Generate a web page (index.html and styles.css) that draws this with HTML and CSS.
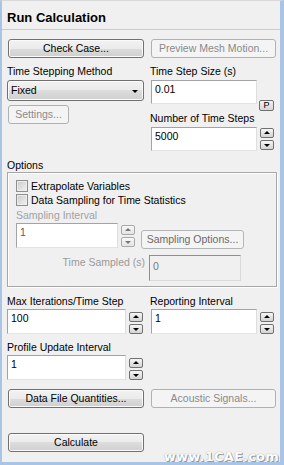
FILE: index.html
```html
<!DOCTYPE html>
<html>
<head>
<meta charset="utf-8">
<link rel="stylesheet" href="styles.css">
</head>
<body>
<div class="panel">
  <div class="title">Run Calculation</div>
  <div class="content">
    <div class="two btn-row">
      <div class="col-l"><button class="btn btn-l">Check Case...</button></div>
      <div class="col-r"><button class="btn dis btn-r">Preview Mesh Motion...</button></div>
    </div>

    <div class="two sec2">
      <div class="col-l">
        <div class="lbl">Time Stepping Method</div>
        <div class="combo"><span>Fixed</span><span class="caret"></span></div>
        <button class="btn dis settings">Settings...</button>
      </div>
      <div class="col-r">
        <div class="lbl">Time Step Size (s)</div>
        <div class="frow r24">
          <div class="input in-r">0.01</div>
          <div class="pbtn">P</div>
        </div>
        <div class="lbl mt8">Number of Time Steps</div>
        <div class="frow r24">
          <div class="input in-r">5000</div>
          <div class="spin"><span class="sb up"></span><span class="sb down"></span></div>
        </div>
      </div>
    </div>

    <div class="lbl opt-lbl">Options</div>
    <div class="group">
      <div class="chk-row"><span class="chk"></span>Extrapolate Variables</div>
      <div class="chk-row"><span class="chk"></span>Data Sampling for Time Statistics</div>
      <div class="lbl dis-t samp-lbl">Sampling Interval</div>
      <div class="frow samp-row">
        <div class="input in-s grey-val">1</div>
        <div class="spin dspin"><span class="sb up"></span><span class="sb down"></span></div>
        <button class="btn dis2 samp-btn">Sampling Options...</button>
      </div>
      <div class="frow ts-row">
        <div class="ts-lbl">Time Sampled (s)</div>
        <div class="input in-ts">0</div>
      </div>
    </div>

    <div class="two sec3">
      <div class="col-l">
        <div class="lbl">Max Iterations/Time Step</div>
        <div class="frow r25">
          <div class="input in-l">100</div>
          <div class="spin"><span class="sb up"></span><span class="sb down"></span></div>
        </div>
        <div class="lbl mt7">Profile Update Interval</div>
        <div class="frow r25">
          <div class="input in-l">1</div>
          <div class="spin"><span class="sb up"></span><span class="sb down"></span></div>
        </div>
      </div>
      <div class="col-r">
        <div class="lbl">Reporting Interval</div>
        <div class="frow r25">
          <div class="input in-r">1</div>
          <div class="spin"><span class="sb up"></span><span class="sb down"></span></div>
        </div>
      </div>
    </div>

    <div class="two dfq-row">
      <div class="col-l"><button class="btn btn-l">Data File Quantities...</button></div>
      <div class="col-r"><button class="btn dis btn-r">Acoustic Signals...</button></div>
    </div>

    <div class="two calc-row">
      <div class="col-l"><button class="btn btn-l">Calculate</button></div>
    </div>
  </div>
  <div class="watermark">www.1CAE.com</div>
</div>
</body>
</html>
```

FILE: styles.css
```css
* { box-sizing: border-box; }
html, body { margin: 0; padding: 0; background: #f0f0f0; }
body {
  font-family: "Liberation Sans", Arial, sans-serif;
  font-size: 10.5px;
  color: #000;
}
.panel {
  position: relative;
  width: 284px;
  height: 465px;
  background: #f0f0f0;
  border-top: 1px solid #d9d9d9;
  border-left: 2px solid #a9c4e4;
  border-right: 4px solid #a9c4e4;
  border-bottom: 3px solid #a9c4e4;
  overflow: hidden;
}
.title {
  font-size: 13px;
  font-weight: bold;
  line-height: 15px;
  padding: 9px 0 4px 5px;
  height: 29px;
  border-bottom: 1px solid #c9cdd2;
}
.content { padding-left: 5px; }
.two { display: flex; align-items: flex-start; }
.col-l { width: 137px; margin-right: 6px; flex: none; }
.col-r { width: 127px; flex: none; }

.lbl { height: 13px; line-height: 13px; white-space: nowrap; }
.mt8 { margin-top: 8px; }
.mt7 { margin-top: 7px; }

button { font: inherit; padding: 0; margin: 0; cursor: default; }
.btn {
  display: block;
  height: 19px;
  line-height: 17px;
  text-align: center;
  color: #000;
  border: 1px solid #707070;
  border-radius: 3px;
  background: linear-gradient(#f2f2f2 0%, #ebebeb 50%, #dddddd 50%, #cfcfcf 100%);
  box-shadow: inset 0 0 0 1px #fbfbfb;
  white-space: nowrap;
}
.btn.dis {
  color: #8a8a8a;
  border-color: #adb2b5;
  background: #f4f4f4;
  box-shadow: none;
}
.btn.dis2 {
  color: #6a6a6a;
  border-color: #b4b7ba;
  background: #f4f4f4;
  box-shadow: none;
}
.btn-l { margin-left: 1px; width: 136px; }
.btn-r { margin-left: 1px; width: 125px; }

.btn-row { margin-top: 9px; }
.sec2 { margin-top: 7px; }

.combo {
  margin-top: 2px;
  height: 21px;
  width: 137px;
  border: 1px solid #707070;
  border-radius: 3px;
  background: linear-gradient(#f2f2f2 0%, #ebebeb 50%, #dddddd 50%, #cfcfcf 100%);
  box-shadow: inset 0 0 0 1px #fbfbfb;
  display: flex;
  align-items: center;
  justify-content: space-between;
  padding: 0 5px 0 3px;
  line-height: 19px;
}
.caret {
  width: 0; height: 0;
  border-left: 3px solid transparent;
  border-right: 3px solid transparent;
  border-top: 3px solid #000;
  margin-top: 1px;
}
.settings { margin-top: 4px; margin-left: 1px; width: 61px; }

.frow { display: flex; align-items: flex-start; margin-top: 2px; }
.r24 .input { height: 24px; }
.r25 { margin-top: 1px; }
.r25 .input { height: 25px; }

.input {
  background: #fff;
  border: 1px solid;
  border-color: #a3a3a3 #dedede #e3e3e3 #a3a3a3;
  padding: 2px 0 0 3px;
  line-height: 13px;
  white-space: nowrap;
  flex: none;
}
.in-r { margin-left: 1px; width: 106px; }
.in-l { width: 119px; }
.in-s { width: 102px; height: 25px; }
.grey-val { color: #5a5a5a; }
.in-ts {
  width: 92px;
  height: 26px;
  background: #f0f0f0;
  border-color: #8e8e8e #dadada #dadada #8e8e8e;
  color: #7a7a7a;
  padding-top: 4px;
}

.pbtn {
  margin-left: 2px;
  margin-top: 20px;
  margin-bottom: -7px;
  width: 15px;
  height: 11px;
  border: 1px solid #707070;
  border-radius: 2px;
  background: linear-gradient(#f2f2f2, #d6d6d6);
  font-size: 9px;
  line-height: 9px;
  text-align: center;
}

.spin {
  margin-left: 3px;
  margin-top: 1px;
  display: flex;
  flex-direction: column;
  gap: 2px;
}
.r25 .spin { margin-top: 3px; }
.sb {
  position: relative;
  display: block;
  width: 14px;
  height: 10px;
  border: 1px solid #707070;
  border-radius: 2px;
  background: linear-gradient(#f6f6f6, #d4d4d4);
}
.sb::after {
  content: "";
  position: absolute;
  left: 3px;
  top: 2px;
  border-left: 3px solid transparent;
  border-right: 3px solid transparent;
}
.sb.up::after { border-bottom: 3px solid #000; }
.sb.down::after { border-top: 3px solid #000; top: 3px; }
.dspin .sb { border-color: #a8a8a8; background: linear-gradient(#f8f8f8, #e4e4e4); }
.dspin .sb.up::after { border-bottom-color: #777; }
.dspin .sb.down::after { border-top-color: #777; }

.opt-lbl { margin-top: 8px; }
.group {
  width: 270px;
  border: 1px solid #a7a7a7;
  box-shadow: inset 1px 1px 0 #fff, 1px 1px 0 #fff;
  padding: 6px 0 5px 8px;
}
.chk-row {
  height: 14px;
  line-height: 13px;
  display: flex;
  align-items: center;
  white-space: nowrap;
}
.chk {
  width: 12px;
  height: 12px;
  border: 1px solid #8e8f8f;
  background: linear-gradient(135deg, #c9c9c9, #f3f3f3);
  box-shadow: inset 0 0 0 1px #ececec;
  margin-right: 3px;
  flex: none;
}
.dis-t { color: #a2a2a2; }
.samp-lbl { margin-top: 2px; }
.samp-row { margin-top: 1px; }
.samp-row .spin { margin-top: 2px; }
.samp-btn { margin-left: 6px; margin-top: 7px; width: 103px; }
.ts-row { margin-top: 6px; }
.ts-lbl {
  width: 129px;
  text-align: right;
  margin-right: 4px;
  color: #9a9a9a;
  line-height: 13px;
  padding-top: 1px;
  white-space: nowrap;
}

.sec3 { margin-top: 8px; }
.dfq-row { margin-top: 9px; }
.calc-row { margin-top: 25px; }

.watermark {
  position: absolute;
  right: 1px;
  bottom: -2px;
  font-family: "DejaVu Sans", sans-serif;
  font-weight: bold;
  font-size: 13px;
  color: #fdfdfd;
  text-shadow: 0 0 1px #8a8a8a, 1px 1px 0 #9a9a9a;
  letter-spacing: 0.2px;
}
```
